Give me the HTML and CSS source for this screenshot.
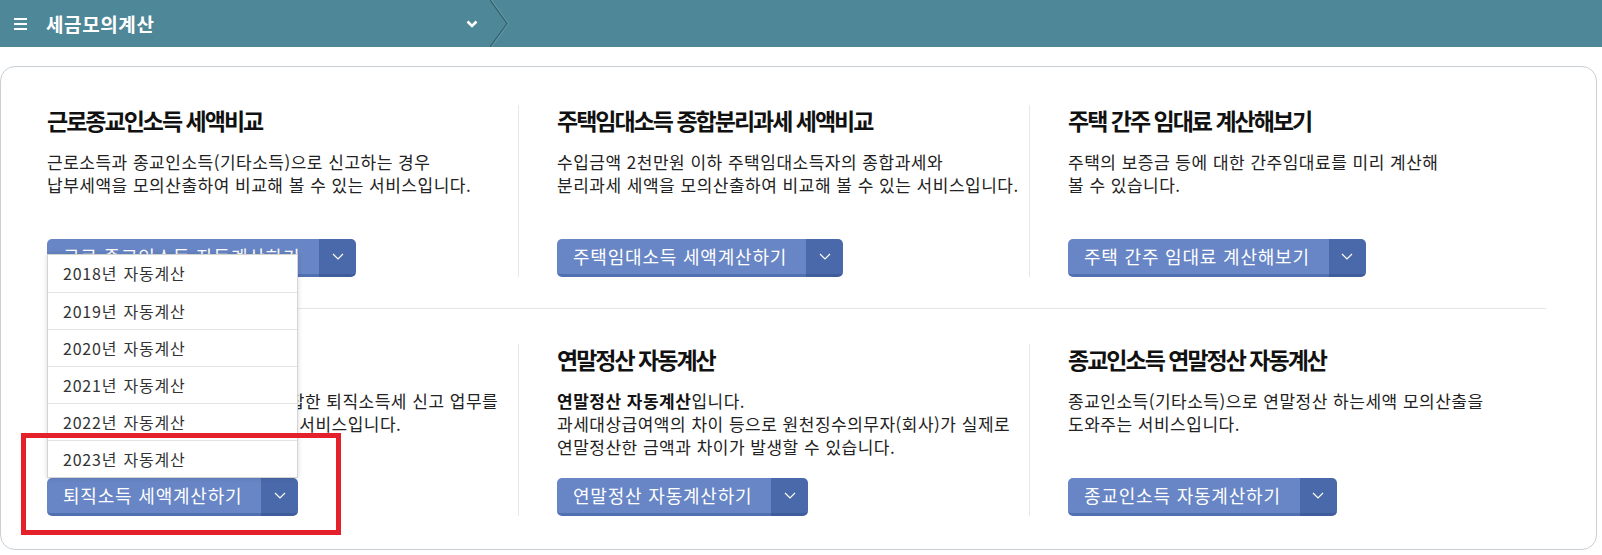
FILE: index.html
```html
<!DOCTYPE html>
<html lang="ko">
<head>
    <meta charset="UTF-8">
    <meta name="viewport" content="width=device-width, initial-scale=1.0">
    <title>세금모의계산</title>
    <link rel="stylesheet" href="styles.css">
</head>
<body>
    <header class="topbar">
        <div class="topbar-menu">
            <svg class="menu-icon" viewBox="0 0 13 13"><rect y="1" width="13" height="2" fill="#fff"/><rect y="6" width="13" height="2" fill="#fff"/><rect y="11" width="13" height="2" fill="#fff"/></svg>
            <h1 class="topbar-title">세금모의계산</h1>
            <svg class="topbar-toggle" viewBox="0 0 12 8"><path d="M1.5 1.5l4.5 4.5 4.5-4.5" fill="none" stroke="#fff" stroke-width="2.6"/></svg>
        </div>
        <svg class="topbar-sep" viewBox="0 0 20 47"><path d="M0 0l17 23.5L0 47" fill="none" stroke="#33606d" stroke-width="1.2"/><path d="M1.5 0l17 23.5L1.5 47" fill="none" stroke="#6b9fae" stroke-width="0.8"/></svg>
    </header>

    <main class="calc-box">
        <ul class="calc-row">
            <li class="calc-item">
                <h2>근로종교인소득 세액비교</h2>
                <p class="desc">근로소득과 종교인소득(기타소득)으로 신고하는 경우<br>납부세액을 모의산출하여 비교해 볼 수 있는 서비스입니다.</p>
                <div class="split-btn">
                    <a class="split-main" href="#">근로 종교인소득 자동계산하기</a>
                    <span class="split-arrow"><svg viewBox="0 0 12 7"><path d="M1 1l5 5 5-5" fill="none" stroke="#fff" stroke-width="1.2"/></svg></span>
                </div>
            </li>
            <li class="calc-item">
                <h2>주택임대소득 종합분리과세 세액비교</h2>
                <p class="desc">수입금액 2천만원 이하 주택임대소득자의 종합과세와<br>분리과세 세액을 모의산출하여 비교해 볼 수 있는 서비스입니다.</p>
                <div class="split-btn">
                    <a class="split-main" href="#">주택임대소득 세액계산하기</a>
                    <span class="split-arrow"><svg viewBox="0 0 12 7"><path d="M1 1l5 5 5-5" fill="none" stroke="#fff" stroke-width="1.2"/></svg></span>
                </div>
            </li>
            <li class="calc-item">
                <h2>주택 간주 임대료 계산해보기</h2>
                <p class="desc">주택의 보증금 등에 대한 간주임대료를 미리 계산해<br>볼 수 있습니다.</p>
                <div class="split-btn">
                    <a class="split-main" href="#">주택 간주 임대료 계산해보기</a>
                    <span class="split-arrow"><svg viewBox="0 0 12 7"><path d="M1 1l5 5 5-5" fill="none" stroke="#fff" stroke-width="1.2"/></svg></span>
                </div>
            </li>
        </ul>
        <ul class="calc-row">
            <li class="calc-item">
                <h2>퇴직소득 세액계산</h2>
                <p class="desc">퇴직금 지급 원천징수의무자의 복잡한 퇴직소득세 신고 업무를<br>간편하게 처리할 수 있게 도와주는 서비스입니다.</p>
                <div class="split-btn">
                    <a class="split-main" href="#">퇴직소득 세액계산하기</a>
                    <span class="split-arrow"><svg viewBox="0 0 12 7"><path d="M1 1l5 5 5-5" fill="none" stroke="#fff" stroke-width="1.2"/></svg></span>
                    <ul class="split-menu">
                        <li>2018년 자동계산</li>
                        <li>2019년 자동계산</li>
                        <li>2020년 자동계산</li>
                        <li>2021년 자동계산</li>
                        <li>2022년 자동계산</li>
                        <li>2023년 자동계산</li>
                    </ul>
                    <span class="mark"></span>
                </div>
            </li>
            <li class="calc-item">
                <h2>연말정산 자동계산</h2>
                <p class="desc"><strong>연말정산 자동계산</strong>입니다.<br>과세대상급여액의 차이 등으로 원천징수의무자(회사)가 실제로<br>연말정산한 금액과 차이가 발생할 수 있습니다.</p>
                <div class="split-btn">
                    <a class="split-main" href="#">연말정산 자동계산하기</a>
                    <span class="split-arrow"><svg viewBox="0 0 12 7"><path d="M1 1l5 5 5-5" fill="none" stroke="#fff" stroke-width="1.2"/></svg></span>
                </div>
            </li>
            <li class="calc-item">
                <h2>종교인소득 연말정산 자동계산</h2>
                <p class="desc">종교인소득(기타소득)으로 연말정산 하는세액 모의산출을<br>도와주는 서비스입니다.</p>
                <div class="split-btn">
                    <a class="split-main" href="#">종교인소득 자동계산하기</a>
                    <span class="split-arrow"><svg viewBox="0 0 12 7"><path d="M1 1l5 5 5-5" fill="none" stroke="#fff" stroke-width="1.2"/></svg></span>
                </div>
            </li>
        </ul>
    </main>
</body>
</html>
```

FILE: styles.css
```css
* {
    box-sizing: border-box;
}
body {
    margin: 0;
    background: #fff;
    color: #222;
    font-family: "Noto Sans CJK KR", "Noto Sans", sans-serif;
}
ul {
    list-style: none;
    margin: 0;
    padding: 0;
}

/* top bar */
.topbar {
    display: flex;
    height: 47px;
    background: #4e8797;
}
.topbar-menu {
    display: flex;
    align-items: center;
    width: 490px;
    padding: 0 12px 0 14px;
    color: #fff;
}
.menu-icon {
    width: 13px;
    height: 13px;
    margin-right: 19px;
}
.topbar-title {
    margin: 0;
    font-size: 19px;
    font-weight: bold;
    letter-spacing: 0.6px;
}
.topbar-toggle {
    width: 12px;
    height: 8px;
    margin-left: auto;
}
.topbar-sep {
    width: 20px;
    height: 47px;
}

/* card */
.calc-box {
    margin: 19px 5px 0 0;
    padding: 0 50px 0 46px;
    border: 1px solid #c8cfd5;
    border-radius: 15px;
}
.calc-row {
    display: grid;
    grid-template-columns: 471px 511px 1fr;
    padding: 38px 0 31px;
}
.calc-row + .calc-row {
    border-top: 1px solid #e6e6e6;
    padding: 35px 0 33px;
}
.calc-item {
    display: flex;
    flex-direction: column;
    align-items: flex-start;
}
.calc-item + .calc-item {
    border-left: 1px solid #e8e8e8;
    padding-left: 38px;
}
.calc-item h2 {
    margin: 0 0 15px;
    font-size: 23px;
    line-height: 30px;
    font-weight: bold;
    letter-spacing: -2px;
    color: #111;
}
.desc {
    min-height: 89px;
    margin: 0;
    font-size: 17px;
    line-height: 23px;
    letter-spacing: 0.5px;
    color: #222;
}
.desc strong {
    color: #111;
}

/* split button */
.split-btn {
    position: relative;
    display: flex;
    height: 38px;
}
.split-main {
    padding: 0 19px 0 16px;
    background: #6886c5;
    border-bottom: 3px solid #5170b2;
    border-radius: 5px 0 0 5px;
    color: #fff;
    font-size: 18px;
    line-height: 35px;
    letter-spacing: 0.8px;
    text-decoration: none;
}
.split-arrow {
    display: flex;
    align-items: center;
    justify-content: center;
    width: 37px;
    background: #4a69aa;
    border-bottom: 3px solid #3f5d9d;
    border-radius: 0 5px 5px 0;
}
.split-arrow svg {
    width: 12px;
    height: 7px;
}
.split-menu {
    position: absolute;
    left: 0;
    right: 0;
    bottom: 100%;
    z-index: 2;
    background: #fff;
    border: 1px solid #d4d4d4;
    box-shadow: 0 0 5px rgba(0, 0, 0, 0.15);
}
.split-menu li {
    height: 37px;
    padding-left: 15px;
    border-top: 1px solid #e3e3e3;
    font-size: 16px;
    line-height: 36px;
    letter-spacing: 0.8px;
    word-spacing: 1px;
    color: #333;
}
.split-menu li:first-child {
    border-top: none;
}

/* red highlight box from the capture */
.mark {
    position: absolute;
    top: -45px;
    left: -26px;
    right: -43px;
    bottom: -19px;
    z-index: 3;
    border: 5px solid #e4212a;
    pointer-events: none;
}
```
